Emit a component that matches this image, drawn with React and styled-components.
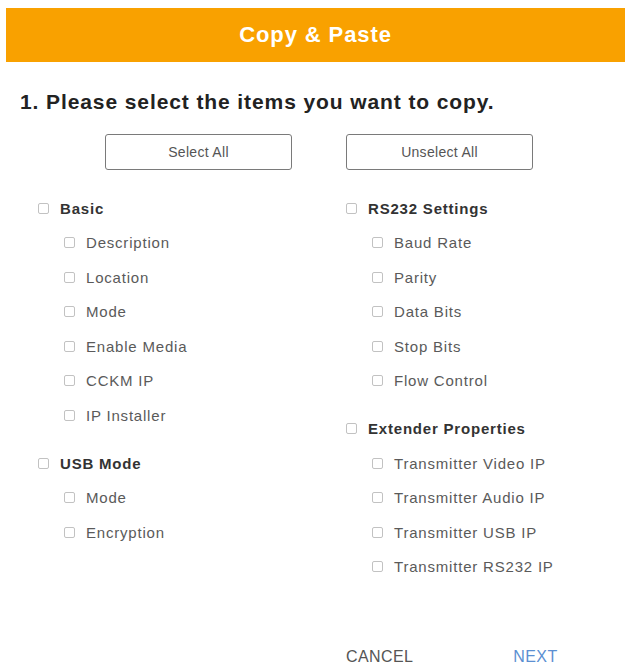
import React from "react";
import styled, { createGlobalStyle } from "styled-components";

const GlobalStyle = createGlobalStyle`
  body {
    margin: 0;
    background: #fff;
    font-family: "Liberation Sans", Arial, sans-serif;
  }
`;

const groups = {
  left: [
    {
      title: "Basic",
      items: ["Description", "Location", "Mode", "Enable Media", "CCKM IP", "IP Installer"],
    },
    { title: "USB Mode", items: ["Mode", "Encryption"] },
  ],
  right: [
    {
      title: "RS232 Settings",
      items: ["Baud Rate", "Parity", "Data Bits", "Stop Bits", "Flow Control"],
    },
    {
      title: "Extender Properties",
      items: [
        "Transmitter Video IP",
        "Transmitter Audio IP",
        "Transmitter USB IP",
        "Transmitter RS232 IP",
      ],
    },
  ],
};

const CheckGroup = ({ group }) => (
  <Group>
    <Row>
      <Box />
      <Label $bold>{group.title}</Label>
    </Row>
    {group.items.map((item) => (
      <Row key={item} $child>
        <Box />
        <Label>{item}</Label>
      </Row>
    ))}
  </Group>
);

const App = () => {
  return (
    <>
      <GlobalStyle />
      <Dialog>
        <Header>Copy &amp; Paste</Header>
        <Heading>1. Please select the items you want to copy.</Heading>
        <ButtonRow>
          <OutlineButton>Select All</OutlineButton>
          <OutlineButton>Unselect All</OutlineButton>
        </ButtonRow>
        <Columns>
          <Column>
            {groups.left.map((g) => (
              <CheckGroup key={g.title} group={g} />
            ))}
          </Column>
          <Column>
            {groups.right.map((g) => (
              <CheckGroup key={g.title} group={g} />
            ))}
          </Column>
        </Columns>
        <Footer>
          <TextButton>CANCEL</TextButton>
          <TextButton $primary>NEXT</TextButton>
        </Footer>
      </Dialog>
    </>
  );
};

const Dialog = styled.div`
  width: 631px;
  height: 670px;
  box-sizing: border-box;
  padding: 8px 6px 0;
  display: flex;
  flex-direction: column;
`;

const Header = styled.div`
  height: 54px;
  background: #f9a100;
  color: #fff;
  font-size: 22px;
  font-weight: 700;
  letter-spacing: 0.9px;
  display: flex;
  align-items: center;
  justify-content: center;
`;

const Heading = styled.h2`
  margin: 28px 0 0 14px;
  font-size: 21px;
  font-weight: 700;
  color: #222;
  letter-spacing: 0.9px;
  line-height: 24px;
`;

const ButtonRow = styled.div`
  display: flex;
  gap: 54px;
  margin: 20px 0 0 99px;
`;

const OutlineButton = styled.button`
  width: 187px;
  height: 36px;
  background: #fff;
  border: 1px solid #7a7a7a;
  border-radius: 3px;
  font-family: inherit;
  font-size: 14px;
  color: #555;
  letter-spacing: 0.3px;
`;

const Columns = styled.div`
  display: grid;
  grid-template-columns: 308px 1fr;
  padding-left: 32px;
  margin-top: 21px;
`;

const Column = styled.div`
  display: flex;
  flex-direction: column;
  gap: 13.5px;
`;

const Group = styled.div`
  display: flex;
  flex-direction: column;
`;

const Row = styled.div`
  height: 34.5px;
  display: flex;
  align-items: center;
  gap: 11px;
  padding-left: ${(p) => (p.$child ? "26px" : "0")};
`;

const Box = styled.span`
  width: 9px;
  height: 9px;
  border: 1px solid #c2c2c2;
  border-radius: 2px;
  flex-shrink: 0;
`;

const Label = styled.span`
  font-size: 15px;
  letter-spacing: 0.8px;
  color: ${(p) => (p.$bold ? "#333" : "#5a5a5a")};
  font-weight: ${(p) => (p.$bold ? 700 : 400)};
`;

const Footer = styled.div`
  margin-top: auto;
  padding: 0 0 4px 340px;
  display: flex;
  gap: 100px;
  line-height: 18px;
`;

const TextButton = styled.span`
  font-size: 16px;
  letter-spacing: 0.4px;
  color: ${(p) => (p.$primary ? "#5b8fd2" : "#555")};
`;

export default App;
